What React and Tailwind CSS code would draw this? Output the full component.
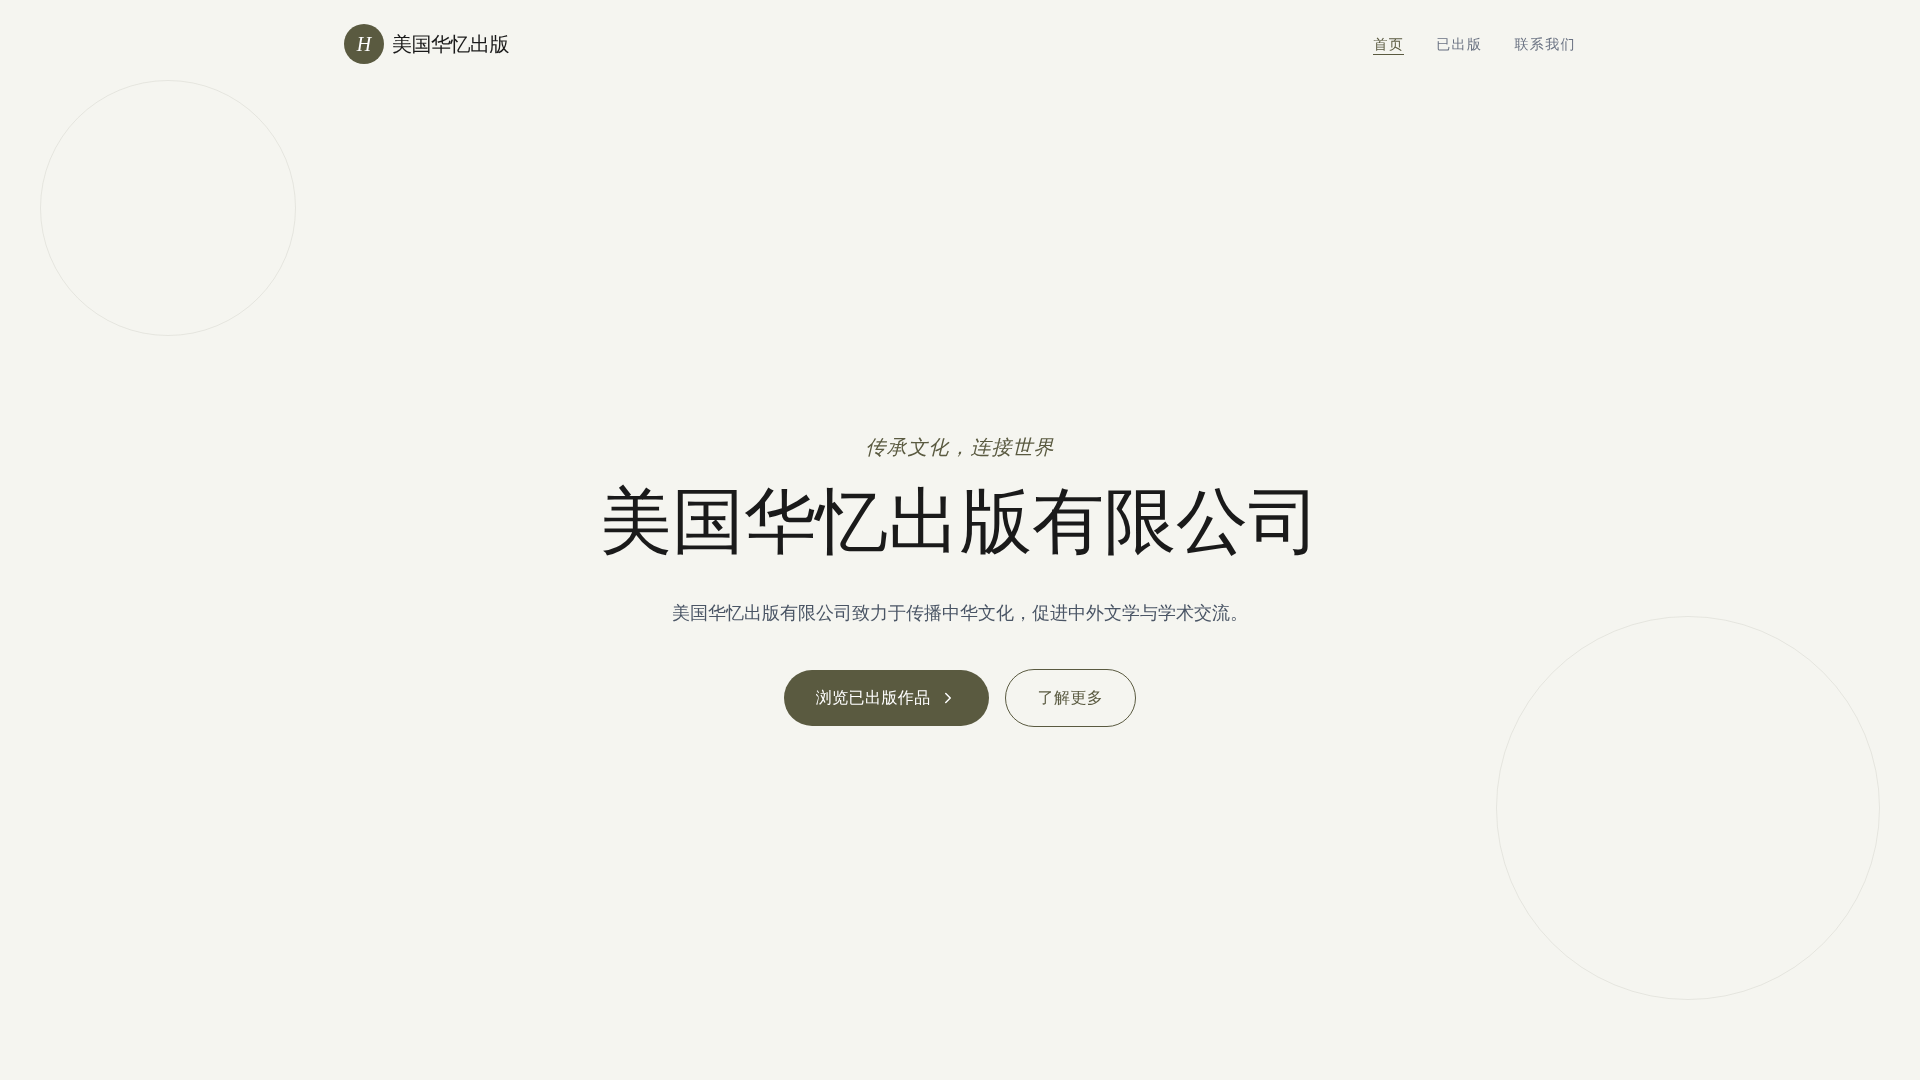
import React from 'react';
import { ChevronRight } from 'lucide-react';

const navItems = [
  { label: '首页', href: '#home', active: true },
  { label: '已出版', href: '#published' },
  { label: '联系我们', href: '#contact' },
];

const Navbar = () => (
  <nav className="fixed inset-x-0 top-0 z-50 py-6">
    <div className="max-w-7xl mx-auto px-6 flex items-center justify-between">
      <a href="#home" className="flex items-center gap-2">
        <span className="w-10 h-10 rounded-full bg-[#5a5a40] text-white flex items-center justify-center italic text-xl">H</span>
        <span className="text-xl tracking-tight text-[#1a1a1a]">美国华忆出版</span>
      </a>
      <div className="flex items-center gap-8 font-['Inter','WenQuanYi_Zen_Hei','Noto_Sans_CJK_SC',sans-serif]">
        {navItems.map((item) => (
          <a
            key={item.href}
            href={item.href}
            className={`text-sm tracking-widest border-b ${item.active ? 'text-[#5a5a40] border-[#5a5a40]' : 'text-gray-500 border-transparent'}`}
          >
            {item.label}
          </a>
        ))}
      </div>
    </div>
  </nav>
);

const Hero = () => (
  <section className="relative min-h-screen flex items-center justify-center overflow-hidden pt-20">
    <div className="absolute top-20 left-10 w-64 h-64 rounded-full border border-[#5a5a40]/10" />
    <div className="absolute bottom-20 right-10 w-96 h-96 rounded-full border border-[#5a5a40]/10" />
    <div className="relative max-w-4xl px-6 text-center">
      <p className="mb-4 italic text-xl tracking-wider text-[#5a5a40]">传承文化，连接世界</p>
      <h1 className="mb-8 text-7xl leading-tight text-[#1a1a1a]">美国华忆出版有限公司</h1>
      <p className="mb-10 text-lg leading-relaxed text-gray-600">美国华忆出版有限公司致力于传播中华文化，促进中外文学与学术交流。</p>
      <div className="flex items-center justify-center gap-4">
        <button className="flex items-center gap-2 px-8 py-4 rounded-full bg-[#5a5a40] text-white tracking-wide">
          浏览已出版作品
          <ChevronRight size={18} />
        </button>
        <button className="px-8 py-4 rounded-full border border-[#5a5a40] text-[#5a5a40] tracking-wide">了解更多</button>
      </div>
    </div>
  </section>
);

const App = () => (
  <div lang="zh-CN" className="min-h-screen bg-[#f5f5f0] font-['Liberation_Serif','WenQuanYi_Zen_Hei','Noto_Sans_CJK_SC',serif]">
    <Navbar />
    <Hero />
  </div>
);

export default App;
